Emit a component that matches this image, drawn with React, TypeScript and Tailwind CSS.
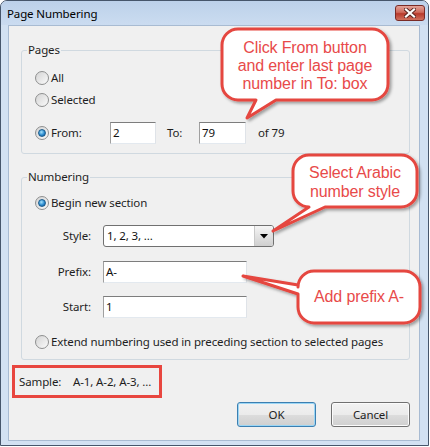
import React from "react";

function Radio({ on }: { on?: boolean }) {
  return (
    <span className="flex h-[14px] w-[14px] shrink-0 items-center justify-center rounded-full border border-[#8e8f8f] bg-[linear-gradient(135deg,#d4d4d4,#fafafa)]">
      {on && (
        <span className="h-[8px] w-[8px] rounded-full border border-[#1d5d8c] bg-[radial-gradient(circle_at_40%_35%,#a6e3fb,#2b8bd0_55%,#0b4f8a)]" />
      )}
    </span>
  );
}

function Field({ w, value }: { w: string; value: string }) {
  return (
    <div
      className={`flex h-[22px] ${w} items-center border border-t-[#7d7d7d] border-l-[#a0a0a0] border-r-[#dfe3e8] border-b-[#e3e9ef] bg-white pl-[2px] text-[#111]`}
    >
      {value}
    </div>
  );
}

function Callouts() {
  return (
    <>
      <svg className="pointer-events-none absolute left-0 top-0" width="430" height="447">
        <defs>
          <filter id="sh" x="-10%" y="-10%" width="130%" height="140%">
            <feDropShadow dx="2" dy="2" stdDeviation="1.5" floodColor="#000" floodOpacity="0.35" />
          </filter>
        </defs>
        <g fill="#fff" stroke="#e5463f" strokeWidth="3" strokeLinejoin="round" filter="url(#sh)">
          <path d="M238 29H372A16 16 0 0 1 388 45V84A16 16 0 0 1 372 100H276L247 118L256 100H238A16 16 0 0 1 222 84V45A16 16 0 0 1 238 29Z" />
          <path d="M309 155H401A16 16 0 0 1 417 171V191A16 16 0 0 1 401 207H325L273 231L309 207A16 16 0 0 1 293 191V171A16 16 0 0 1 309 155Z" />
          <path d="M314 271H404A16 16 0 0 1 420 287V307A16 16 0 0 1 404 323H314A16 16 0 0 1 298 307V294L243 276L298 285V287A16 16 0 0 1 314 271Z" />
        </g>
      </svg>
      <div className="absolute left-[222px] top-[39px] w-[166px] text-center text-[16px] leading-[18px] text-[#e84a4a] font-['Liberation_Sans',Arial,sans-serif]">
        Click From button
        <br />
        and enter last page
        <br />
        number in To: box
      </div>
      <div className="absolute left-[293px] top-[163px] w-[124px] text-center text-[16px] leading-[19px] text-[#e84a4a] font-['Liberation_Sans',Arial,sans-serif]">
        Select Arabic
        <br />
        number style
      </div>
      <div className="absolute left-[298px] top-[288px] w-[122px] text-center text-[16px] leading-[18px] text-[#e84a4a] font-['Liberation_Sans',Arial,sans-serif]">
        Add prefix A-
      </div>
    </>
  );
}

export default function App() {
  return (
    <div className="relative h-[447px] w-[430px] overflow-hidden bg-white text-[11.5px] leading-[16px] tracking-[-0.12px] text-[#1e1e1e] font-['Noto_Sans',sans-serif]">
      <div className="flex h-[446px] w-[429px] flex-col rounded-t-[7px] border border-[#46566b] bg-[#d2e1f2]">
        {/* title bar */}
        <div className="flex h-[24px] shrink-0 items-start justify-between rounded-t-[6px] bg-gradient-to-b from-[#bcd1ea] to-[#cbdcf0] pl-[6px] pr-[3px]">
          <span className="mt-[5px] text-black">Page Numbering</span>
          <div className="mt-[4px] flex h-[16px] w-[30px] items-center justify-center rounded-[3px] border border-[#7a2b26] bg-[linear-gradient(#e3a398,#cf6a5c_45%,#b8392b_55%,#d0705e)]">
            <svg width="12" height="10" viewBox="0 0 12 10">
              <path d="M2 1.5L10 8.5M10 1.5L2 8.5" stroke="#5a2420" strokeWidth="4" strokeLinecap="square" />
              <path d="M2 1.5L10 8.5M10 1.5L2 8.5" stroke="#fff" strokeWidth="2.2" strokeLinecap="square" />
            </svg>
          </div>
        </div>

        {/* client area */}
        <div className="ml-[7px] flex h-[416px] w-[412px] flex-col border border-[#a8bbd2] bg-[#f0f0f0]">
          <fieldset className="ml-[12px] mt-[16px] w-[389px] rounded-[3px] border border-[#d0d9e0] pb-[9px] pt-[9px]">
            <legend className="ml-[5px] px-[1px]">Pages</legend>
            <div className="flex h-[22px] items-center pl-[13px]">
              <Radio />
              <span className="ml-[2px]">All</span>
            </div>
            <div className="flex h-[22px] items-center pl-[13px]">
              <Radio />
              <span className="ml-[2px]">Selected</span>
            </div>
            <div className="mt-[11px] flex h-[22px] items-center pl-[13px]">
              <Radio on />
              <span className="ml-[2px] w-[59px]">From:</span>
              <Field w="w-[46px]" value="2" />
              <span className="ml-[11px] w-[32px]">To:</span>
              <Field w="w-[47px]" value="79" />
              <span className="ml-[12px]">of 79</span>
            </div>
          </fieldset>

          <fieldset className="ml-[12px] mt-[15px] w-[389px] rounded-[3px] border border-[#d0d9e0] pb-[6px] pt-[7px]">
            <legend className="ml-[5px] px-[1px]">Numbering</legend>
            <div className="flex h-[22px] items-center pl-[13px]">
              <Radio on />
              <span className="ml-[2px]">Begin new section</span>
            </div>
            <div className="mt-[11px] flex h-[22px] items-center">
              <span className="w-[69px] text-right">Style:</span>
              <div className="ml-[12px] flex h-[22px] w-[171px] items-center overflow-hidden rounded-[3px] border border-[#707070] bg-white">
                <span className="flex-1 pl-[3px] text-[#111]">1, 2, 3, ...</span>
                <span className="flex h-full w-[19px] items-center justify-center border-l border-[#c9c9c9] bg-gradient-to-b from-[#f5f5f5] to-[#cfcfcf]">
                  <svg width="8" height="5" viewBox="0 0 8 5">
                    <path d="M0 0H8L4 4.5Z" fill="#000" />
                  </svg>
                </span>
              </div>
            </div>
            <div className="mt-[14px] flex h-[22px] items-center">
              <span className="w-[69px] text-right">Prefix:</span>
              <div className="ml-[12px]">
                <Field w="w-[144px]" value="A-" />
              </div>
            </div>
            <div className="mt-[13px] flex h-[22px] items-center">
              <span className="w-[69px] text-right">Start:</span>
              <div className="ml-[12px]">
                <Field w="w-[144px]" value="1" />
              </div>
            </div>
            <div className="mt-[13px] flex h-[22px] items-center pl-[13px]">
              <Radio />
              <span className="ml-[2px]">Extend numbering used in preceding section to selected pages</span>
            </div>
          </fieldset>

          <div className="ml-[3px] mt-[5px] flex h-[33px] w-[150px] items-center border-[3px] border-[#e8463f] pl-[4px]">
            <span className="w-[54px]">Sample:</span>
            <span>A-1, A-2, A-3, ...</span>
          </div>

          <div className="mt-[4px] flex justify-end gap-[15px] pr-[9px]">
            <button className="flex h-[25px] w-[79px] items-center justify-center rounded-[3px] border border-[#3c7fb1] bg-[linear-gradient(#f2f2f2,#ebebeb_50%,#dddddd_50%,#cfcfcf)] shadow-[inset_0_0_0_1px_#9bd6f5]">
              OK
            </button>
            <button className="flex h-[25px] w-[79px] items-center justify-center rounded-[3px] border border-[#707070] bg-[linear-gradient(#f2f2f2,#ebebeb_50%,#dddddd_50%,#cfcfcf)] shadow-[inset_0_0_0_1px_#fbfbfb]">
              Cancel
            </button>
          </div>
        </div>
      </div>
      <Callouts />
    </div>
  );
}
